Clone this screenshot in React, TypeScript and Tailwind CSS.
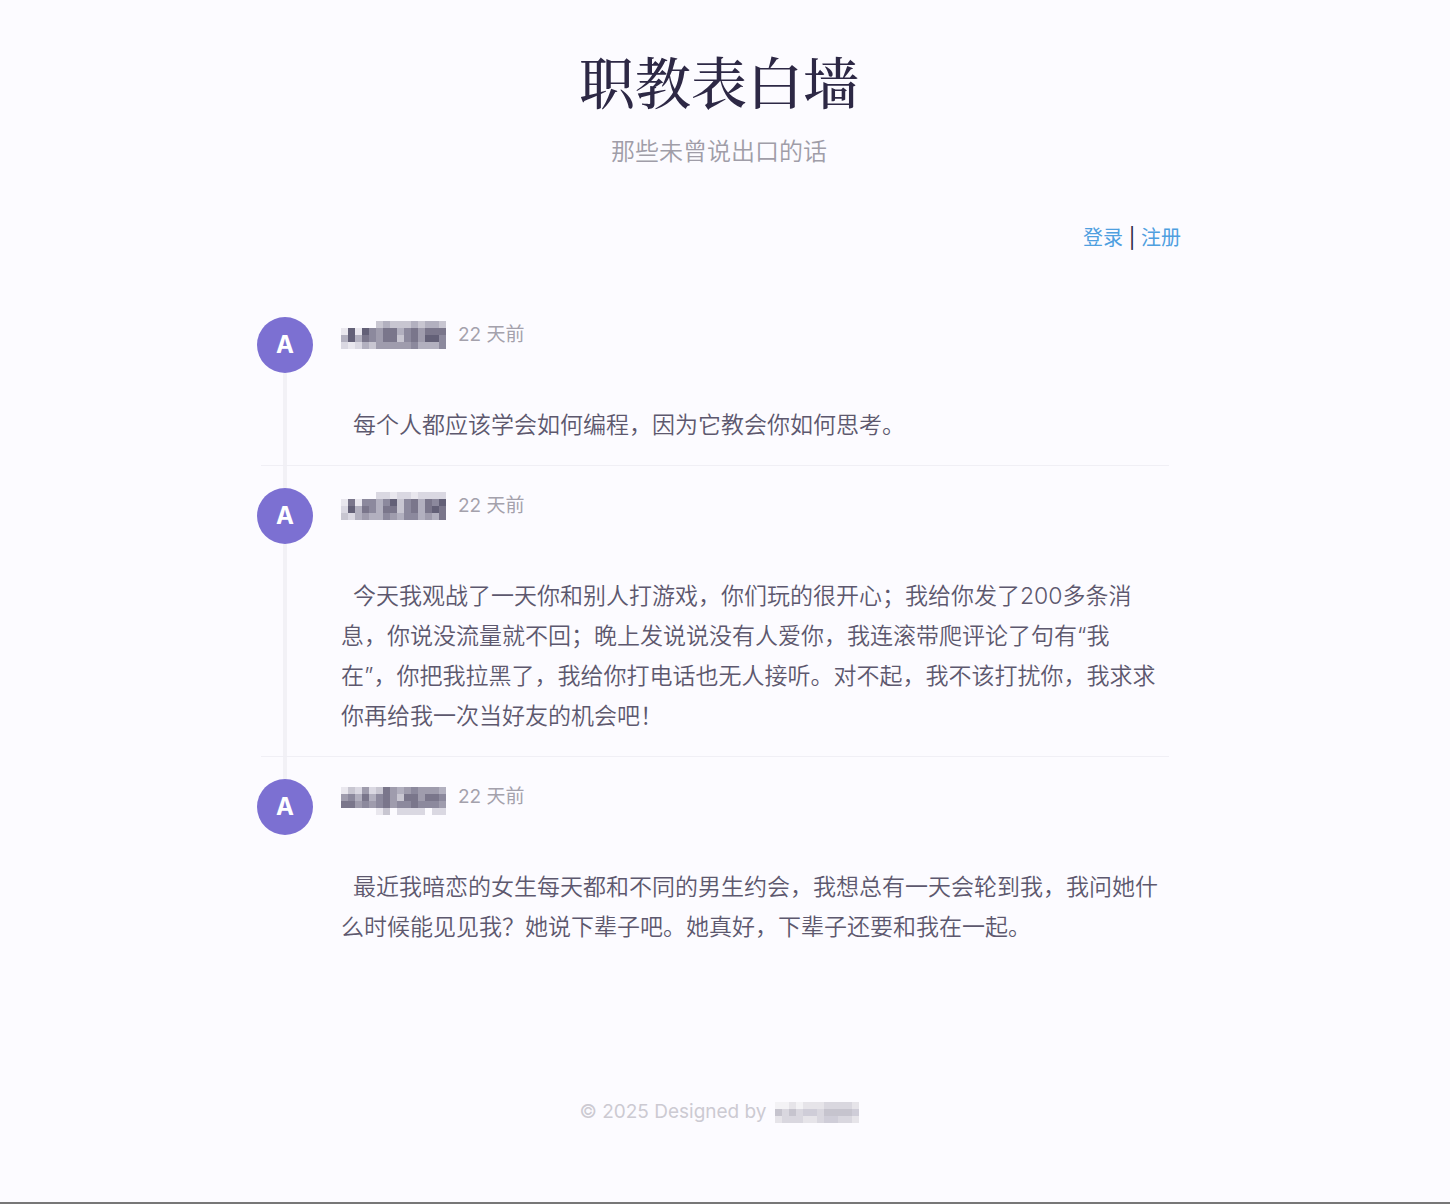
import { Fragment } from 'react';

const shades = ['#fcfbff', '#e9e7ee', '#dad8e2', '#c8c6d1', '#b2b0bf', '#9f9cad', '#8c899d', '#7a768b', '#636077'];
const footerShades = ['#fcfbff', '#f3f2f5', '#e6e4e9', '#d9d7df', '#cfcdd8', '#c6c4ce'];

const footerMask = ['112122233332', '535344355554', '233322344332'];

type MosaicProps = { rows: string[]; palette?: string[] };

function Mosaic({ rows, palette = shades }: MosaicProps) {
  const w = rows[0].length * 7;
  const h = rows.length * 7;
  return (
    <svg width={w} height={h} viewBox={`0 0 ${w} ${h}`} shapeRendering="crispEdges" aria-hidden="true">
      {rows.map((row, y) =>
        row
          .split('')
          .map((s, x) => <rect key={`${x}-${y}`} x={x * 7} y={y * 7} width={7} height={7} fill={palette[Number(s)]} />),
      )}
    </svg>
  );
}

const posts = [
  {
    mask: ['000003433343443', '181865774675777', '484765773675886', '212435555564446'],
    maskOffset: 'pt-1',
    lines: ['每个人都应该学会如何编程，因为它教会你如何思考。'],
  },
  {
    mask: ['000002212212222', '171664683674768', '284764773674787', '324544654664547'],
    maskOffset: 'pt-1',
    lines: [
      '今天我观战了一天你和别人打游戏，你们玩的很开心；我给你发了200多条消',
      '息，你说没流量就不回；晚上发说说没有人爱你，我连滚带爬评论了句有“我',
      '在”，你把我拉黑了，我给你打电话也无人接听。对不起，我不该打扰你，我求求',
      '你再给我一次当好友的机会吧！',
    ],
  },
  {
    mask: ['132523754565554', '564746753775776', '775656756676665', '000001302222022'],
    maskOffset: 'pt-2',
    lines: [
      '最近我暗恋的女生每天都和不同的男生约会，我想总有一天会轮到我，我问她什',
      '么时候能见见我？她说下辈子吧。她真好，下辈子还要和我在一起。',
    ],
  },
];

export default function App() {
  return (
    <div
      lang="zh-CN"
      className="flex min-h-screen flex-col border-b-2 border-[#777] bg-[#fcfbff] pr-3 font-['Inter','Noto_Sans_CJK_SC',sans-serif] text-[#5d586e]"
    >
      <div className="mx-auto w-full max-w-[924px]">
        <header className="pt-11 text-center">
          <h1 className="font-['Noto_Serif_CJK_SC','Noto_Sans_CJK_SC',serif] text-[56px] leading-[72px] font-medium text-[#2d2845]">
            职教表白墙
          </h1>
          <p className="mt-4 text-2xl leading-10 font-[350] text-[#a09da8]">那些未曾说出口的话</p>
        </header>
        <nav className="mt-13 text-right text-xl leading-7 text-[#2d2845]">
          <a href="#login" className="text-[#4f9fdf]">登录</a>
          {' | '}
          <a href="#register" className="text-[#4f9fdf]">注册</a>
        </nav>
        <main className="mt-[43px]">
          {posts.map((post, i) => {
            const last = i === posts.length - 1;
            return (
              <article key={i} className="flex gap-7">
                <div className="flex w-14 shrink-0 flex-col items-center">
                  <div className={i > 0 ? 'h-[22px] w-1 bg-[#f2f1f6]' : 'h-[22px]'} />
                  <div className="flex size-14 items-center justify-center rounded-full bg-[#7c70d2] text-2xl font-bold text-white">
                    A
                  </div>
                  {!last && <div className="w-1 flex-1 bg-[#f2f1f6]" />}
                </div>
                <div className={last ? 'grow' : 'relative grow pb-[21px]'}>
                  <div className="flex h-[110px] items-start gap-3 pt-[22px]">
                    <div className={post.maskOffset}>
                      <Mosaic rows={post.mask} />
                    </div>
                    <time className="pt-1 text-[19px] leading-7 text-[#a4a1ac]">22 天前</time>
                  </div>
                  <p className="indent-3 text-[23px] leading-10 font-[350]">
                    {post.lines.map((line, n) => (
                      <Fragment key={line}>
                        {n > 0 && <br />}
                        {line}
                      </Fragment>
                    ))}
                  </p>
                  {!last && <div className="absolute right-3 bottom-0 -left-20 h-px bg-[#f0eff5]" />}
                </div>
              </article>
            );
          })}
        </main>
      </div>
      <footer className="mt-[151px] flex items-center justify-center gap-2 text-[19px] leading-7 text-[#cccad2]">
        <span>© 2025 Designed by</span>
        <Mosaic rows={footerMask} palette={footerShades} />
      </footer>
    </div>
  );
}
